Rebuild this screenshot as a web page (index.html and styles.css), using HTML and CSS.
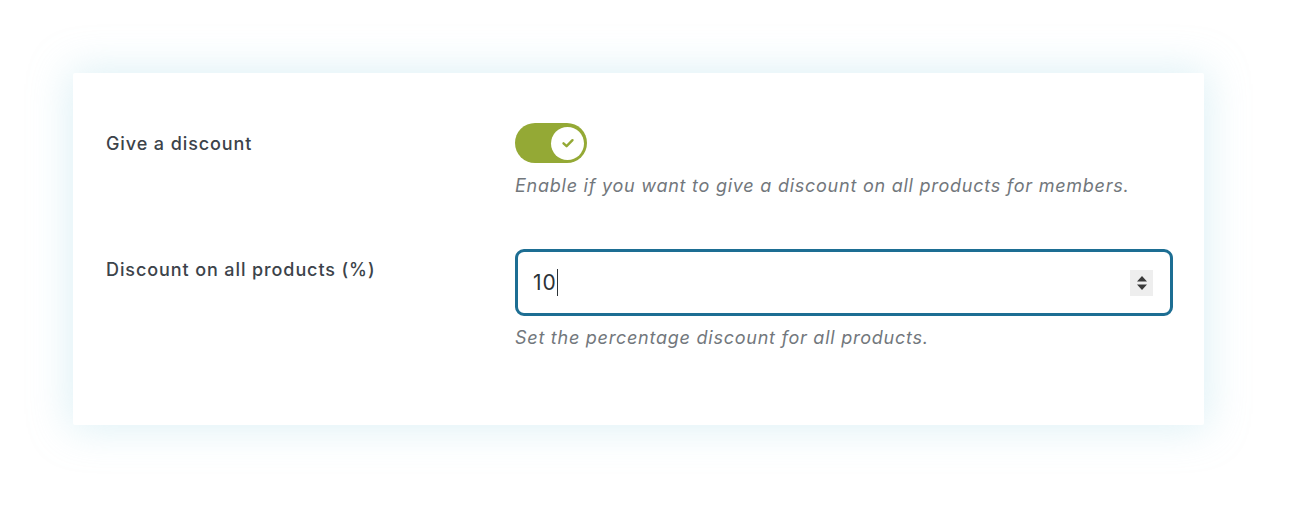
FILE: index.html
```html
<!DOCTYPE html>
<html lang="en">
<head>
<meta charset="utf-8">
<title>Discount settings</title>
<link rel="stylesheet" href="styles.css">
</head>
<body>
<div class="page">
  <div class="card">
    <div class="row">
      <div class="label">Give a discount</div>
      <div class="field">
        <div class="toggle">
          <span class="knob">
            <svg width="16" height="16" viewBox="0 0 16 16"><path d="M3.5 8.3 L6.6 11.2 L12.5 5.2" fill="none" stroke="#94a935" stroke-width="2.4" stroke-linecap="round" stroke-linejoin="round"/></svg>
          </span>
        </div>
        <p class="desc">Enable if you want to give a discount on all products for members.</p>
      </div>
    </div>
    <div class="row">
      <div class="label">Discount on all products (%)</div>
      <div class="field">
        <div class="input">
          <span class="value">10</span><span class="caret"></span>
          <span class="spinner">
            <svg width="12" height="18" viewBox="0 0 12 18"><path d="M6 2 L11 7.5 L1 7.5 Z M6 16 L11 10.5 L1 10.5 Z" fill="#3a3a3a"/></svg>
          </span>
        </div>
        <p class="desc">Set the percentage discount for all products.</p>
      </div>
    </div>
  </div>
</div>
</body>
</html>
```
FILE: styles.css
```css
html, body {
  margin: 0;
  padding: 0;
  background: #ffffff;
}
body {
  font-family: Inter, "Open Sans", "Liberation Sans", sans-serif;
  color: #3c434a;
}
.page {
  padding: 73px 96px 99px 73px;
}
.card {
  background: #fff;
  height: 352px;
  box-sizing: border-box;
  padding: 50px 31px 0 33px;
  box-shadow: 0 0 40px 4px rgba(160, 215, 230, 0.35);
  border-radius: 2px;
}
.row {
  display: grid;
  grid-template-columns: 409px 1fr;
  margin-bottom: 51px;
}
.label {
  padding-top: 9px;
  font-size: 18px;
  line-height: 24px;
  font-weight: 500;
  letter-spacing: 0.9px;
  color: #3c434a;
}
.field {
  display: flex;
  flex-direction: column;
  align-items: flex-start;
}
.toggle {
  width: 72px;
  height: 40px;
  border-radius: 20px;
  background: #94a935;
  display: flex;
  align-items: center;
  justify-content: flex-end;
  padding-right: 3px;
  box-sizing: border-box;
}
.knob {
  width: 33px;
  height: 33px;
  border-radius: 50%;
  background: #fff;
  display: flex;
  align-items: center;
  justify-content: center;
}
.desc {
  margin: 11px 0 0 0;
  font-size: 18px;
  line-height: 24px;
  font-style: italic;
  color: #72777c;
  letter-spacing: 0.75px;
}
.input {
  width: 100%;
  height: 67px;
  box-sizing: border-box;
  border: 3px solid #1d6e93;
  border-radius: 9px;
  display: flex;
  align-items: center;
  padding: 0 17px 0 15px;
}
.input + .desc {
  margin-top: 10px;
}
.value {
  font-size: 21px;
  letter-spacing: 1px;
  color: #2c3338;
}
.caret {
  width: 1.5px;
  height: 27px;
  background: #2c3338;
  margin-left: 0;
}
.spinner {
  margin-left: auto;
  width: 23px;
  height: 26px;
  background: #eeeeee;
  display: flex;
  align-items: center;
  justify-content: center;
}
```
